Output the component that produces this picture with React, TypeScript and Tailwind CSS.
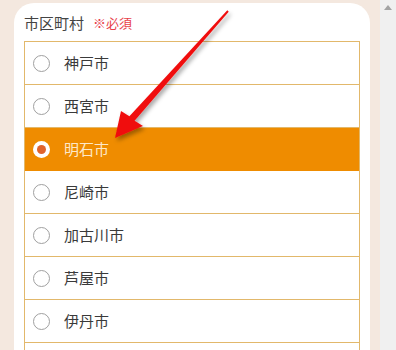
const cities = ['神戸市', '西宮市', '明石市', '尼崎市', '加古川市', '芦屋市', '伊丹市'];
const selected = '明石市';

function Radio({ checked }: { checked: boolean }) {
  if (checked) {
    return (
      <span className="w-[17px] h-[17px] rounded-full bg-white flex items-center justify-center shrink-0">
        <span className="w-[9px] h-[9px] rounded-full bg-[#e0642c]" />
      </span>
    );
  }
  return <span className="w-[17px] h-[17px] rounded-full border-[1.5px] border-[#a0a0a0] bg-white shrink-0" />;
}

function Arrow() {
  return (
    <svg className="absolute left-0 top-0 pointer-events-none" width="396" height="350" viewBox="0 0 396 350">
      <defs>
        <filter id="sh" x="-20%" y="-20%" width="140%" height="140%">
          <feDropShadow dx="2" dy="3" stdDeviation="2" floodColor="#000" floodOpacity="0.35" />
        </filter>
      </defs>
      <polygon
        points="227.3,10.3 228.7,11.7 134.6,120.8 143,126 115,138 121,111 129.4,116.2"
        fill="#f00f0f"
        filter="url(#sh)"
      />
    </svg>
  );
}

export default function App() {
  return (
    <div className="relative w-[396px] h-[350px] flex overflow-hidden bg-[#f4e8df] font-['Noto_Sans_CJK_JP','Noto_Sans',sans-serif]">
      <div className="flex-1 pl-[14px] pr-[10px] pt-[3px]">
        <div className="h-full bg-white rounded-t-[20px] px-[10px] pt-[7px]">
          <div className="flex items-center h-[24px] mb-[7px]">
            <span className="text-[15px] text-[#444] leading-none">市区町村</span>
            <span className="ml-[9px] text-[13px] text-[#e8414a] leading-none">※必須</span>
          </div>
          <div className="border-x border-t border-[#e2b86b]">
            {cities.map((c) => {
              const on = c === selected;
              return (
                <div
                  key={c}
                  className={
                    on
                      ? 'flex items-center h-[43px] pl-[8px] bg-[#ef8c00] border-b border-[#ef8c00]'
                      : 'flex items-center h-[43px] pl-[8px] border-b border-[#e2b86b]'
                  }
                >
                  <Radio checked={on} />
                  <span className={on ? 'ml-[14px] text-[15px] text-[#fde8c8]' : 'ml-[14px] text-[15px] text-[#3a3a3a]'}>
                    {c}
                  </span>
                </div>
              );
            })}
            <div className="h-[43px]" />
          </div>
        </div>
      </div>
      <div className="w-[16px] bg-[#f0f0f0] flex justify-center pt-[5px]">
        <svg width="8" height="5" viewBox="0 0 8 5">
          <polygon points="4,0 8,5 0,5" fill="#a3a3a3" />
        </svg>
      </div>
      <Arrow />
    </div>
  );
}
